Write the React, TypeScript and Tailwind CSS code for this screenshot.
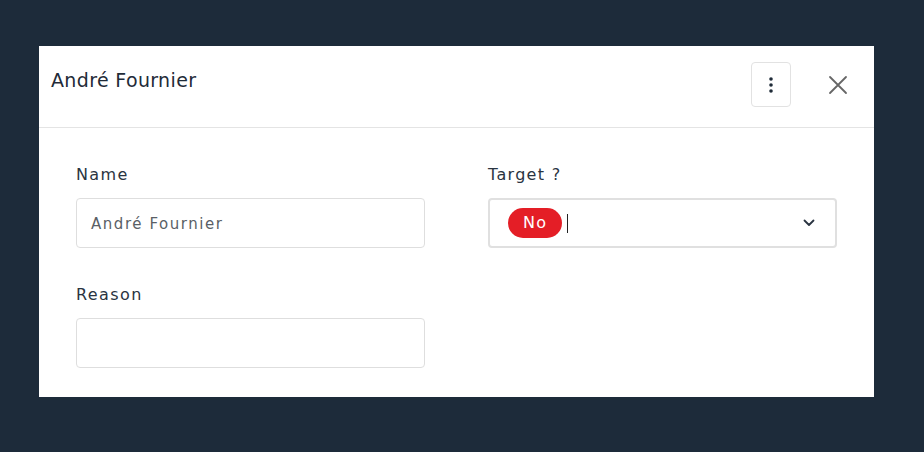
import React from "react";

export default function App() {
  return (
    <div
      className="w-[924px] h-[452px] bg-[#1d2b3a] pt-[46px] pl-[39px]"
      style={{ fontFamily: '"DejaVu Sans", "Open Sans", sans-serif' }}
    >
      <div className="w-[835px] h-[351px] bg-white flex flex-col">
        <div className="h-[82px] border-b border-[#e4e4e4] flex items-start pl-[12px] pr-[25px]">
          <div className="mt-[21px] text-[19px] leading-[26px] tracking-[0.35px] text-[#1f2b38] flex-1">André Fournier</div>
          <button className="mt-[16px] w-[40px] h-[45px] border border-[#e2e2e2] rounded-[4px] flex items-center justify-center">
            <svg width="4" height="16" viewBox="0 0 4 16">
              <circle cx="2" cy="2" r="1.8" fill="#1f2b38" />
              <circle cx="2" cy="8" r="1.8" fill="#1f2b38" />
              <circle cx="2" cy="14" r="1.8" fill="#1f2b38" />
            </svg>
          </button>
          <button className="mt-[28px] ml-[36px] w-[22px] h-[22px] flex items-center justify-center">
            <svg width="20" height="20" viewBox="0 0 20 20" stroke="#666" strokeWidth="1.8" strokeLinecap="round">
              <path d="M2 2 L18 18 M18 2 L2 18" />
            </svg>
          </button>
        </div>
        <div className="px-[37px] pt-[36px] grid grid-cols-2 gap-x-[63px] gap-y-[36px]">
          <div>
            <div className="text-[16px] leading-[22px] tracking-[1.4px] text-[#2a3441] mb-[12px]">Name</div>
            <div className="h-[50px] border border-[#dedede] rounded-[4px] flex items-center px-[14px] pt-[2px] text-[15px] tracking-[1.55px] text-[#5a5f66]">
              André Fournier
            </div>
          </div>
          <div>
            <div className="text-[16px] leading-[22px] tracking-[1.3px] text-[#2a3441] mb-[12px]">Target ?</div>
            <div className="h-[50px] border-2 border-[#e0e0e0] rounded-[4px] flex items-center pl-[18px] pr-[20px]">
              <span className="h-[30px] px-[15px] rounded-full bg-[#e41e26] text-white text-[16px] tracking-[1.3px] flex items-center">No</span>
              <span className="ml-[5px] w-px h-[19px] bg-[#222]" />
              <span className="flex-1" />
              <svg width="12" height="8" viewBox="0 0 12 8" fill="none" stroke="#2a3441" strokeWidth="1.8" strokeLinecap="round" strokeLinejoin="round">
                <path d="M1.5 1.5 L6 6 L10.5 1.5" />
              </svg>
            </div>
          </div>
          <div>
            <div className="text-[16px] leading-[22px] tracking-[1.4px] text-[#2a3441] mb-[12px]">Reason</div>
            <div className="h-[50px] border border-[#dedede] rounded-[4px]" />
          </div>
        </div>
      </div>
    </div>
  );
}
